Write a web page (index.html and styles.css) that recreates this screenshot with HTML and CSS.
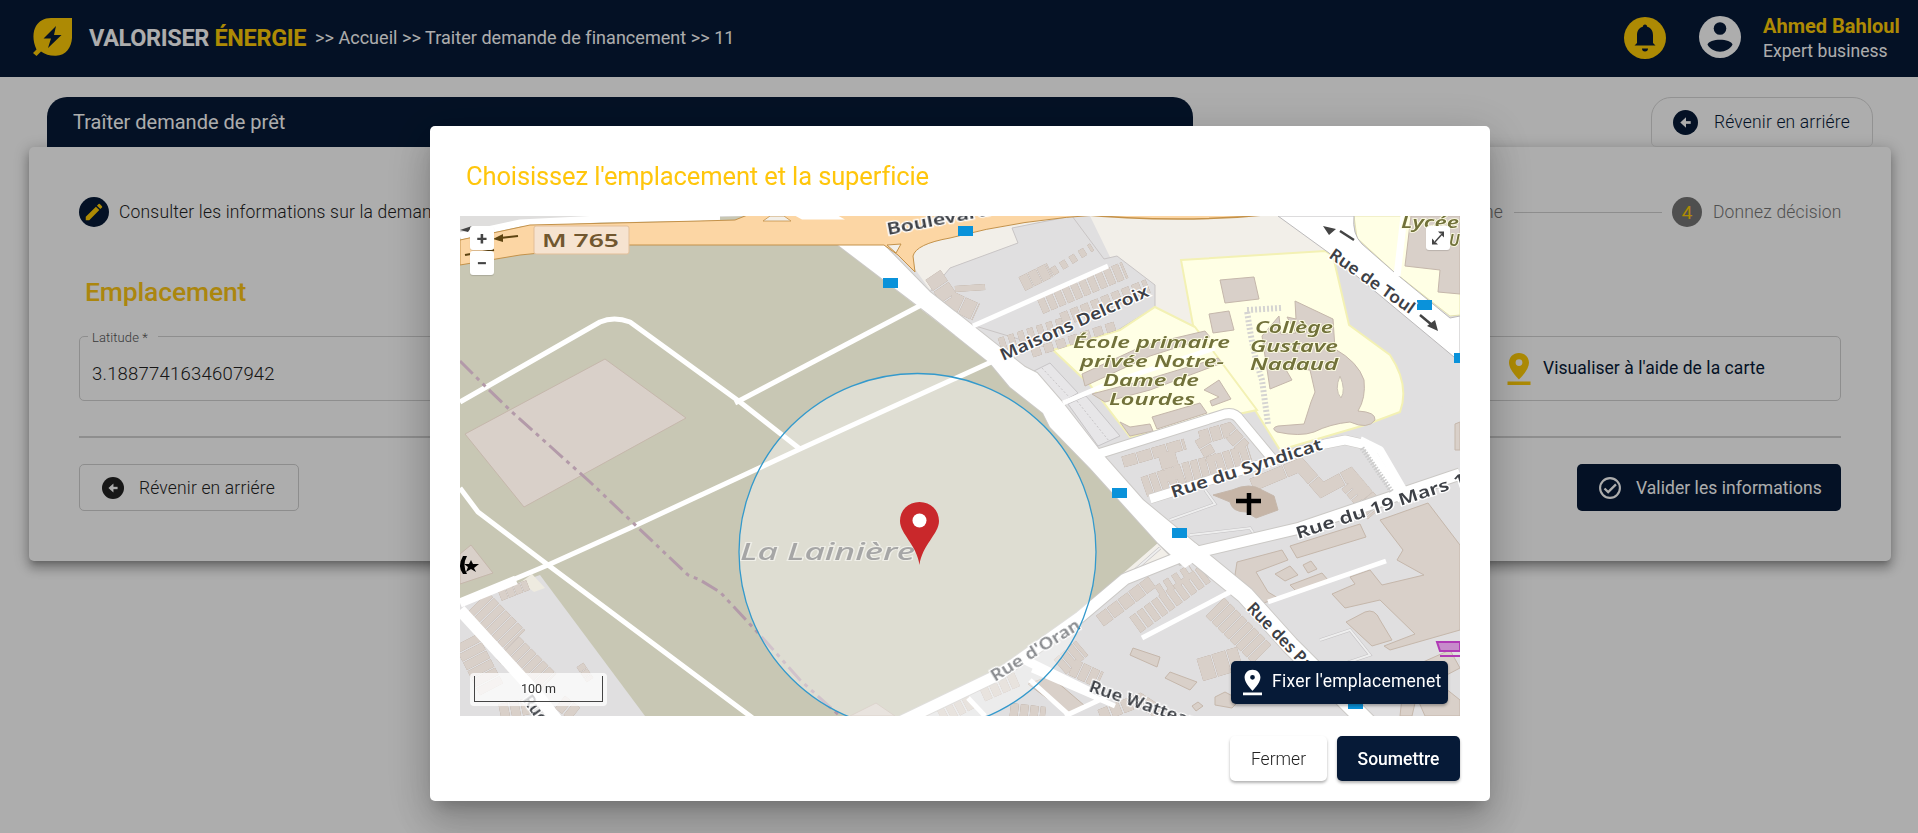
FILE: index.html
```html
<!DOCTYPE html>
<html lang="fr">
<head>
<meta charset="utf-8">
<title>Valoriser Énergie</title>
<link rel="stylesheet" href="styles.css">
</head>
<body>
<header class="topbar">
  <svg class="logo" viewBox="0 0 39 38"><path d="M0 35L3.500 31.500C-1 22 0 13 3 8C6 3 11 0 18 0H39V20C38.500 29 33 37.500 23 37.800C17 38 12 36.500 8 33.500L3.500 38Z" fill="#ffcc06"/><path d="M23 8L10.500 20.500H18L15 30L28.500 17H21Z" fill="#061a37"/></svg>
  <div class="brand">VALORISER <span>ÉNERGIE</span></div>
  <nav class="crumbs">&gt;&gt; Accueil &gt;&gt; Traiter demande de financement &gt;&gt; 11</nav>
  <div class="account">
    <svg class="round" viewBox="0 0 42 42"><circle cx="21" cy="21" r="21" fill="#ffcc06"/><path d="M21 7.500c1.400 0 2.200 1 2.200 2.300C27.500 11 29 14.500 29 18.500V26l2.500 2.500H10.500L13 26v-7.500c0-4 1.500-7.500 5.800-8.700 0-1.300.8-2.300 2.200-2.300ZM18 31.500h6a3 3 0 0 1-6 0Z" fill="#061a37"/></svg>
    <svg class="round user" viewBox="0 0 42 42"><circle cx="21" cy="21" r="21" fill="#fff"/><circle cx="21" cy="12.500" r="6.300" fill="#061a37"/><path d="M8.500 28.500C10 22 32 22 33.500 28.500C29 38 13 38 8.500 28.500Z" fill="#061a37"/></svg>
    <div><div class="name">Ahmed Bahloul</div><div class="role">Expert business</div></div>
  </div>
</header>
<main class="page">
  <div class="tabs">
    <h1 class="tab">Traîter demande de prêt</h1>
    <button class="tab-back"><svg class="ic25" viewBox="0 0 24 24"><circle cx="12" cy="12" r="12" fill="#061a37"/><path d="M17 12H9" stroke="#fff" stroke-width="2.600"/><path d="M12.500 7V17L7 12Z" fill="#fff"/></svg>Révenir en arriére</button>
  </div>
  <section class="card">
    <div class="steps">
      <span class="dot active"><svg viewBox="0 0 24 24"><path d="M3 17.200V21h3.800L17.800 9.900l-3.700-3.700ZM20.700 7a1 1 0 0 0 0-1.400l-2.300-2.300a1 1 0 0 0-1.400 0l-1.800 1.800 3.700 3.700Z" fill="#ffcc06"/></svg></span>
      <span class="step-text on">Consulter les informations sur la demande</span>
      <i class="rail"></i>
      <span class="step-text">Vérifier le domaine</span>
      <i class="rail last"></i>
      <span class="dot">4</span>
      <span class="step-text end">Donnez décision</span>
    </div>
    <h2 class="section">Emplacement</h2>
    <div class="fields">
      <div class="field"><label>Latitude *</label><span>3.1887741634607942</span></div>
      <button class="see-map"><svg viewBox="0 0 24 32"><path d="M12 0C6 0 2 4.300 2 9.800C2 17 12 26.500 12 26.500S22 17 22 9.800C22 4.300 18 0 12 0Zm0 13a3.400 3.400 0 1 1 0-6.800 3.400 3.400 0 0 1 0 6.800ZM.5 28.500h23V32H.5Z" fill="#ffcc06" fill-rule="evenodd"/></svg><span>Visualiser à l'aide de la carte</span></button>
    </div>
    <div class="actions">
      <button class="back"><svg class="ic22" viewBox="0 0 24 24"><circle cx="12" cy="12" r="12" fill="#222"/><path d="M17 12H9" stroke="#fff" stroke-width="2.600"/><path d="M12.500 7V17L7 12Z" fill="#fff"/></svg>Révenir en arriére</button>
      <button class="validate"><svg class="ic22" viewBox="0 0 24 24" fill="none" stroke="#fff"><circle cx="12" cy="12" r="10.800" stroke-width="2.300"/><path d="M6 12.500l4 4L18.500 8" stroke-width="2.500"/></svg>Valider les informations</button>
    </div>
  </section>
</main>
<div class="backdrop">
  <div class="dialog" role="dialog">
    <h3 class="dialog-title">Choisissez l'emplacement et la superficie</h3>
    <div class="map">
      <svg class="tiles" viewBox="460 216 1000 500">
        <defs>
          <g id="stop"><rect width="15" height="10" fill="#0a92da"/></g>
        </defs>
        <g class="soft">
          <rect x="460" y="216" width="1000" height="500" fill="#c8c7b4"/>
          <path d="M838 245L884 245L930 216H1460V716H915L1000 672L1080 615L1158 543L1090 468L1043 413L990 363Z" fill="#e0dfe0"/>
          <path d="M895 216H1278L1330 253L1190 260L1195 326L1155 307V290L1110 257L1090 216L1070 216L1012 228L1018 243L950 268L930 290L905 255Z" fill="#f2efe9"/>
          <path d="M950 268L1018 243L1012 228L1072 216L1104 259L1117 256L1155 285V307L1118 330L1055 350L972 325L930 292Z" fill="#e0dfe0" stroke="#c9c5c5"/>
          <path d="M1158 543L1185 550L1120 580L1040 645Z" fill="#f2efe9"/>
          <path d="M1332 254L1349 325L1390 355L1404 392V400L1460 410V360Z" fill="#e0dfe0"/>
          <path d="M460 604L540 575L645 716H460Z" fill="#e0dfe0"/>
          <path d="M521 582L532 574L545 588L534 592Z" fill="#eeebe0"/>

          <!-- schools -->
          <path d="M1181 260L1325 251L1333 256L1349 325L1390 355Q1410 385 1400 412L1365 425L1280 450L1255 410L1193 325Z" fill="#ffffe5" stroke="#f3f1b4" stroke-width="2"/>
          <path d="M1155 307L1195 327L1257 410L1215 419L1130 437L1090 385L1053 350L1120 330Z" fill="#ffffe5" stroke="#f3f1b4" stroke-width="2"/>
          <path d="M1354 216H1460V315L1450 316L1394 272L1357 238Z" fill="#ffffe5" stroke="#e5e2b0"/>
          <g class="bld">
            <path d="M1411 216L1405 266L1440 270L1438 292L1460 294V216Z"/>
            <path d="M1220 280L1254 277L1259 299L1225 303Z"/><path d="M1209 314L1229 311L1234 330L1213 333Z"/>
            <path d="M1295 301L1333 319L1335 349Q1358 362 1364 380Q1366 398 1358 411Q1376 412 1375 420Q1368 430 1350 422Q1330 424 1314 432Q1300 437 1277 432Q1270 428 1278 426L1304 424L1311 402L1315 392L1310 370L1285 368L1292 380L1270 389L1262 336L1279 316L1281 334L1296 333L1287 317L1296 319Z"/>
            <path d="M1082 374L1145 345L1205 331L1210 337L1150 356L1085 386Z"/><path d="M1092 394L1145 380L1218 358L1222 363L1150 390L1105 402Z"/>
            <path d="M1204 390L1219 380L1231 399L1212 406L1210 401L1219 397Z"/>
            <path d="M1152 417L1200 403L1207 413L1157 429Z"/><path d="M1120 422L1130 427L1150 424L1153 431L1130 436Z"/>
          </g>
          <path d="M1340 376Q1346 390 1341 398Q1334 390 1340 376Z" fill="#ffffe5" stroke="#c9bfb5"/>
          <path d="M1281 308L1247 310Q1252 350 1262 380L1268 424" fill="none" stroke="#d5d4d2" stroke-width="6" stroke-dasharray="2 2"/>

          <!-- dense housing rows -->
          <g class="rows">
            <path d="M933 275L950 300L976 312" stroke-width="18" stroke-dasharray="13 1.500"/><path d="M955 289L985 287" stroke-width="6"/>
            <path d="M1022 284L1050 270" stroke-width="15" stroke-dasharray="9 1"/><path d="M1052 272L1092 247" stroke-width="8" stroke-dasharray="6 5"/>
            <path d="M1040 306L1125 270" stroke-width="17" stroke-dasharray="7 2"/><path d="M1062 320L1148 286" stroke-width="14" stroke-dasharray="8 3"/>
            <path d="M1000 345L1065 324" stroke-width="14" stroke-dasharray="6 4"/><path d="M1032 353L1118 325" stroke-width="9" stroke-dasharray="9 4"/>
            <path d="M1123 462L1185 444" stroke-width="11" stroke-dasharray="14 1.500"/><path d="M1166 452L1174 480" stroke-width="17" stroke-dasharray="16 1"/>
            <path d="M1144 487L1184 473L1218 464L1250 454" stroke-width="20" stroke-dasharray="7 1.500"/>
            <path d="M1200 438L1228 430L1244 448" stroke-width="14" stroke-dasharray="10 1.500"/><path d="M1200 438L1214 462" stroke-width="12" stroke-dasharray="9 1.500"/>
            <path d="M1252 485L1300 465L1322 490L1350 475L1375 505" stroke-width="13" stroke-dasharray="35 1.500"/><path d="M1350 482L1376 512" stroke-width="22" stroke-dasharray="6 1.500"/>
            <path d="M1100 621L1152 582" stroke-width="13" stroke-dasharray="12 1.500"/><path d="M1135 625L1205 574" stroke-width="19" stroke-dasharray="7 2"/>
            <path d="M1158 592L1192 570" stroke-width="13" stroke-dasharray="6 4"/>
            <path d="M1215 607L1262 654" stroke-width="26" stroke-dasharray="7 1.500"/><path d="M1200 670L1240 658" stroke-width="23" stroke-dasharray="14 1.500"/>
            <path d="M1060 667L1082 648" stroke-width="19" stroke-dasharray="7 1.500"/><path d="M1072 667L1100 680" stroke-width="17" stroke-dasharray="8 1.500"/>
            <path d="M940 716L970 700" stroke-width="18" stroke-dasharray="7 2"/><path d="M982 694L1018 678" stroke-width="16" stroke-dasharray="8 2"/>
            <path d="M1100 716L1140 700L1170 720" stroke-width="13" stroke-dasharray="10 2"/><path d="M1010 712L1045 716" stroke-width="18" stroke-dasharray="8 2"/>
            <path d="M478 602L515 640" stroke-width="28" stroke-dasharray="7 1.500"/><path d="M500 596L528 585" stroke-width="10" stroke-dasharray="7 1"/>
            <path d="M508 648L545 685" stroke-width="32" stroke-dasharray="7 1.500"/><path d="M466 640L492 690" stroke-width="26" stroke-dasharray="8 1.500"/>
            <path d="M500 712L530 706M560 702L575 714" stroke-width="16" stroke-dasharray="9 2"/><path d="M580 665L590 680" stroke-width="8" stroke-dasharray="6 1"/>
          </g>
          <g class="bld">
            <path d="M605 359L686 418L524 507L465 434Z"/>
            <path d="M460 554L471 545L493 573L460 584Z" fill="#cdbdb0"/>
            <path class="church" d="M1213 495L1232 490Q1250 482 1262 490L1274 496L1278 510L1256 518L1246 512Q1232 512 1230 502Z"/>
            <path d="M1237 562L1282 550L1288 560L1256 572L1268 592L1278 598L1258 605L1235 575Z"/>
            <path d="M1275 574L1290 566L1298 575L1285 581ZM1303 565L1311 561L1317 569L1308 573ZM1290 585L1322 573L1328 580L1297 592Z"/>
            <path d="M1290 546L1360 524L1366 537L1297 558Z"/>
            <path d="M1380 520L1428 503L1460 545V630L1390 650L1384 646L1415 634L1380 600L1345 608L1332 594L1355 584L1350 577L1370 570L1382 585L1424 575L1397 560L1403 550Z"/>
            <path d="M1346 622L1365 612Q1375 608 1380 620L1392 640L1372 646Z"/>
            <path d="M1130 655L1133 648L1160 657L1157 667Z"/><path d="M1165 678L1170 672L1197 682L1190 690Z"/><path d="M1192 706L1198 702L1203 706L1196 711Z"/>
            <path d="M1215 697L1225 692L1240 700L1232 708L1215 705Z"/>
            <path d="M1028 684L1050 676L1085 706L1068 714Z"/><path d="M1450 650L1405 670L1400 716H1412L1418 690L1460 668Z"/>
            <path d="M1418 700L1445 688L1460 700V716H1425Z"/><path d="M1455 424L1460 422V450H1455Z"/>
            <path d="M858 712L876 703L895 716H850Z"/>
          </g>
          <path d="M1034 371L1050 363L1078 393L1062 402ZM1068 404L1086 396L1120 436L1098 446Z" fill="#e7e6e8" stroke="#c7c5c7"/>
          <path d="M1042 368L1070 398M1077 401L1109 441" stroke="#c7c5c7" stroke-dasharray="2 2"/>
          <path d="M1170 520L1215 504L1205 490M1190 535L1250 528L1258 540M1160 548L1135 570L1142 577M1320 640L1350 630L1370 655L1340 665" fill="none" stroke="#c3c1c3" stroke-width="3"/>
          <path d="M1170 520L1215 504L1205 490M1190 535L1250 528L1258 540M1160 548L1135 570L1142 577M1320 640L1350 630L1370 655L1340 665" fill="none" stroke="#eee" stroke-width="2"/>

          <!-- streets -->
          <g fill="none" stroke="#cbc9c6" stroke-linejoin="round">
            <path d="M900 722L1000 674L1080 617L1125 579L1185 555L1300 528L1460 474" stroke-width="13"/>
            <path d="M1150 499L1325 444L1345 440L1367 445L1402 500" stroke-width="10"/>
            <path d="M1098 454L1225 414Q1235 412 1240 420L1275 462" stroke-width="11"/>
            <path d="M1190 550L1245 595L1290 645L1370 725" stroke-width="19"/>
            <path d="M838 245H884L930 292L972 325L1025 367L1037 373L1063 403L1105 457L1143 500L1207 553L1180 565L1158 543L1090 468L1050 427L1043 413L1010 387L990 363L930 315Z" stroke-width="2"/>
          </g>
          <path d="M838 245H884L930 292L972 325L1025 367L1037 373L1063 403L1105 457L1143 500L1207 553L1185 568L1158 543L1090 468L1050 427L1043 413L1010 387L990 363L930 315Z" fill="#fff"/>
          <g fill="none" stroke="#fff" stroke-linejoin="round">
            <path d="M460 402L600 322Q614 316 630 322L740 402L800 449" stroke-width="5"/>
            <path d="M735 403L925 303" stroke-width="5"/>
            <path d="M460 602L548 565L630 528L800 449L1000 358" stroke-width="5"/>
            <path d="M460 488L478 512L548 565L750 716L760 724" stroke-width="5"/>
            <path d="M460 603L516 580" stroke-width="9"/>
            <path d="M460 610L535 692L560 724" stroke-width="12"/>
            <path d="M900 722L1000 674L1080 617L1125 579L1185 555L1300 528L1460 474" stroke-width="11"/>
            <path d="M1150 499L1325 444L1345 440L1367 445L1402 500" stroke-width="9"/>
            <path d="M1098 454L1225 414Q1235 412 1240 420L1275 462" stroke-width="9"/>
            <path d="M1360 440L1380 450L1408 498" stroke-width="8"/>
            <path d="M973 326L1108 266M1063 403L1110 383L1215 348" stroke-width="5"/>
            <path d="M1190 550L1245 595L1290 645L1370 725" stroke-width="17"/>
            <path d="M1142 638L1230 592M1268 602L1386 561M1032 670L1115 706M1030 680L1070 716M968 698L985 716M1065 716L1110 695" stroke-width="5"/>
            <path d="M1025 660L1090 692" stroke-width="9"/>
          </g>
          <path d="M1362 448L1392 492" stroke="#ccc" stroke-width="5" stroke-dasharray="1.500 1.500"/>
          <path d="M1278 216H1354Q1352 234 1362 244L1394 272L1450 318L1460 316V362L1329 253Z" fill="#fff" stroke="#bcbabb"/>
          <path d="M1404 216L1397 276" stroke="#fff" stroke-width="7"/>

          <!-- ring road -->
          <path d="M460 216H750L530 224L460 238Z" fill="#dfdedd"/>
          <path d="M460 236L520 223L600 219L720 217" fill="none" stroke="#fff" stroke-width="7"/>
          <path d="M460 240L530 225L700 221L735 220L750 214H1110Q1020 219 950 238Q916 244 913 256L915 272L898 255L884 245H620L520 255L460 265Z" fill="#fcd6a4" stroke="#c4924a"/>
          <path d="M887 245L901 244L896 253Z" fill="#f2efe9" stroke="#c4924a"/>
          <path d="M763 221L770 216H784L791 221Z" fill="#f2efe9" stroke="#c4924a" stroke-width=".8"/>
          <path d="M792 214H835L845 219.500H802Z" fill="#fff"/>
          <path d="M1075 214Q1180 224 1275 214" fill="#fcd6a4" stroke="#c4924a" stroke-width="1.500"/>
          <rect x="534" y="226" width="95" height="28" rx="2" fill="#f6e3d0" stroke="#e3bf99"/>
          <path d="M518 236L500 238" stroke="#5e4411" stroke-width="2"/><path d="M493 239L503 234V242Z" fill="#5e4411"/>
          <path d="M465 255L494 250" stroke="#5e4411" stroke-width="2"/>
          <path d="M460 230L472 226L468 232Z" fill="#444"/>

          <path d="M460 361L487 388L512 412L590 482L688 575L700 580L720 592L760 635L800 680L840 716" fill="none" stroke="#b39aa9" stroke-width="3" stroke-dasharray="18 5 4 5 4 5"/>
          <path d="M463 556Q457 566 463 574L467 574Q462 565 467 556ZM471 560L473 564L479 564L474 568L476 572L471 569L466 572L468 567L464 564L469 564Z"/>
          <path d="M1249 493V515M1236 501H1261" stroke="#000" stroke-width="4.500"/>
          <path d="M1437 642H1460V651H1440ZM1440 656H1460" fill="#c78bcb" stroke="#b03ab5" stroke-width="2"/>
          <path d="M1354 240L1340 231M1420 315L1432 325" stroke="#444" stroke-width="2.500"/><path d="M1323 226L1336 229L1329 235ZM1438 331L1427 326L1435 320Z" fill="#444"/>

          <use href="#stop" x="883" y="278"/><use href="#stop" x="958" y="226"/><use href="#stop" x="1417" y="300"/><use href="#stop" x="1454" y="353"/><use href="#stop" x="1112" y="488"/><use href="#stop" x="1172" y="528"/><use href="#stop" x="1348" y="699"/>

          <g class="street">
            <text x="542" y="247" textLength="77" lengthAdjust="spacingAndGlyphs" class="ref">M 765</text>
            <text transform="translate(888 235) rotate(-11)" textLength="105" lengthAdjust="spacingAndGlyphs">Boulevard</text>
            <text transform="translate(1003 361) rotate(-24)" textLength="161" lengthAdjust="spacingAndGlyphs">Maisons Delcroix</text>
            <text transform="translate(1328 257) rotate(35)" textLength="100" lengthAdjust="spacingAndGlyphs">Rue de Toul</text>
            <text transform="translate(1173 498) rotate(-18)" textLength="158" lengthAdjust="spacingAndGlyphs">Rue du Syndicat</text>
            <text transform="translate(1298 539) rotate(-18)" textLength="190" lengthAdjust="spacingAndGlyphs">Rue du 19 Mars 19</text>
            <text transform="translate(1246 609) rotate(46)" textLength="113" lengthAdjust="spacingAndGlyphs">Rue des Pavés</text>
            <text transform="translate(1088 691) rotate(19)" textLength="115" lengthAdjust="spacingAndGlyphs">Rue Watteau</text>
            <text transform="translate(995 682) rotate(-32)" textLength="102" lengthAdjust="spacingAndGlyphs">Rue d'Oran</text>
            <text transform="translate(522 700) rotate(54)">Rue</text>
          </g>
          <g class="place">
            <text x="1073" y="348" textLength="157" lengthAdjust="spacingAndGlyphs">École primaire</text>
            <text x="1080" y="367" textLength="144" lengthAdjust="spacingAndGlyphs">privée Notre-</text>
            <text x="1103" y="386" textLength="96" lengthAdjust="spacingAndGlyphs">Dame de</text>
            <text x="1109" y="405" textLength="86" lengthAdjust="spacingAndGlyphs">Lourdes</text>
            <text x="1255" y="333" textLength="78" lengthAdjust="spacingAndGlyphs">Collège</text>
            <text x="1250" y="352" textLength="88" lengthAdjust="spacingAndGlyphs">Gustave</text>
            <text x="1250" y="370" textLength="88" lengthAdjust="spacingAndGlyphs">Nadaud</text>
            <text x="1401" y="228" textLength="58" lengthAdjust="spacingAndGlyphs">Lycée</text>
            <text x="1449" y="246">U</text>
          </g>
          <text x="740" y="559.500" textLength="175" lengthAdjust="spacingAndGlyphs" class="area">La Lainière</text>
        </g>
        <circle cx="917.500" cy="552" r="178.500" fill="#fff" fill-opacity=".4" stroke="#3399cc" stroke-width="1.300"/>
        <path d="M919.500 502C908 502 900 510.500 900 521C900 534 917 545 919.500 565C922 545 939 534 939 521C939 510.500 931 502 919.500 502Z" fill="#c9282b"/><circle cx="919.500" cy="520.500" r="7" fill="#fff"/>
      </svg>
      <div class="zoom"><button>+</button><button>−</button></div>
      <button class="expand"><svg viewBox="0 0 24 24"><path d="M8 17L17 7" stroke="#444" stroke-width="1.400"/><path d="M12 5.500H18V11.500L16 9.500V7.500H14ZM6 12.500V18.500H12L10 16.500H8V14.500Z" fill="#444"/></svg></button>
      <div class="scale"><div>100 m</div></div>
      <button class="fix"><svg viewBox="0 0 24 32"><path d="M12 0C6 0 2 4.300 2 9.800C2 17 12 26.500 12 26.500S22 17 22 9.800C22 4.300 18 0 12 0Zm0 12.500a3 3 0 1 1 0-6 3 3 0 0 1 0 6ZM0 28.500h24V32H0Z" fill="#fff" fill-rule="evenodd"/></svg><span>Fixer l'emplacemenet</span></button>
    </div>
    <div class="dialog-actions"><button class="close">Fermer</button><button class="submit">Soumettre</button></div>
  </div>
</div>
</body>
</html>
```
FILE: styles.css
```css
* { box-sizing: border-box; }
body { margin: 0; height: 833px; overflow: hidden; background: #fff; font-family: Roboto, "Noto Sans", sans-serif; font-size: 17.5px; color: #222; }
button { font: inherit; color: inherit; border: 0; padding: 0; background: none; display: flex; align-items: center; white-space: nowrap; }
h1, h2, h3 { margin: 0; }
svg { display: block; flex: none; }

.topbar { height: 77px; background: #061a37; color: #fff; display: flex; align-items: center; padding: 0 18px 0 33px; white-space: nowrap; }
.logo { width: 39px; height: 38px; margin-top: -3px; }
.brand { margin: -2px 0 0 17px; width: 226px; font-size: 23.500px; font-weight: 700; letter-spacing: -.35px; }
.brand span { color: #ffcc06; }
.crumbs { margin-top: -2px; font-size: 18px; letter-spacing: .04px; }
.account { margin-left: auto; display: flex; align-items: center; }
.round { width: 42px; height: 42px; margin-top: -1px; }
.user { margin: -3px 22px 0 33px; }
.name { width: 137px; font-size: 20px; line-height: 25px; font-weight: 700; color: #ffcc06; letter-spacing: 0; }
.role { font-size: 17.500px; line-height: 24px; letter-spacing: .05px; }

.page { padding: 20px 27px 0 29px; }
.tabs { display: flex; justify-content: space-between; padding: 0 18px; height: 50px; }
.tab { width: 1146px; padding-left: 26px; background: #061a37; color: #fff; border-radius: 20px 20px 0 0; font-size: 20px; font-weight: 400; line-height: 50px; letter-spacing: 0; }
.tab-back { width: 222px; height: 50px; padding-left: 21px; gap: 16px; border: 1px solid #d8d8d8; border-radius: 20px 20px 5px 5px; font-weight: 300; letter-spacing: .16px; color: #061a37; }
.ic25 { width: 25px; height: 25px; }
.ic22 { width: 22px; height: 22px; }

.card { height: 414px; padding: 50px 50px 0; border-radius: 5px; background: #fff; box-shadow: 0 5px 5px -3px rgba(0,0,0,.2), 0 8px 10px 1px rgba(0,0,0,.14), 0 3px 14px 2px rgba(0,0,0,.22); }
.steps { height: 30px; display: flex; align-items: center; white-space: nowrap; }
.dot { width: 30px; height: 30px; border-radius: 50%; background: #757575; color: #ffcc06; display: grid; place-items: center; font-size: 19px; }
.dot.active { background: #061a37; }
.dot svg { width: 22px; height: 22px; }
.step-text { color: #777; font-weight: 300; letter-spacing: .15px; }
.step-text.on { color: #222; margin-left: 10px; letter-spacing: .18px; }
.step-text.end { margin-left: 11px; width: 128px; }
.rail { height: 1px; flex: 1; background: #d0d0d0; margin: 0 10px; }
.rail.last { flex: none; width: 148px; margin-left: 11px; }
.section { margin: 49px 0 0 6px; font-size: 26.500px; line-height: 32px; font-weight: 500; color: #fdc615; letter-spacing: -.15px; }
.fields { margin-top: 28px; height: 65px; display: flex; justify-content: space-between; }
.field { width: 900px; border: 1px solid #d2d2d2; border-radius: 5px; padding-left: 8px; display: flex; flex-direction: column; align-items: flex-start; font-weight: 300; }
.field label { margin-top: -7px; padding: 0 8px 0 4px; background: #fff; width: 70px; font-size: 13px; line-height: 16px; color: #555; letter-spacing: .1px; }
.field span { margin: 16px 0 0 4px; line-height: 24px; font-size: 18.500px; letter-spacing: .22px; }
.see-map { width: 460px; border: 1px solid #d2d2d2; border-radius: 5px; padding-left: 125px; gap: 12px; color: #061a37; letter-spacing: .05px; }
.see-map span { margin-top: -2px; }
.see-map svg { width: 24px; height: 32px; }
.actions { margin-top: 35px; border-top: 2px solid #d2d2d2; padding-top: 26px; display: flex; justify-content: space-between; }
.back { width: 220px; height: 47px; padding-left: 22px; gap: 15px; border: 1px solid #d0d0d0; border-radius: 5px; font-weight: 300; letter-spacing: .16px; }
.validate { width: 264px; height: 47px; padding-left: 22px; gap: 15px; background: #061a37; color: #fff; border-radius: 5px; letter-spacing: .05px; }

.backdrop { position: fixed; inset: 0; background: rgba(0,0,0,.32); display: flex; align-items: flex-start; justify-content: center; }
.dialog { width: 1060px; height: 675px; margin: 126px 0 0 2px; padding: 0 30px; background: #fff; border-radius: 5px; box-shadow: 0 11px 15px -7px rgba(0,0,0,.2), 0 24px 38px 3px rgba(0,0,0,.14), 0 9px 46px 8px rgba(0,0,0,.12); }
.dialog-title { height: 90px; padding: 33px 0 0 6px; font-size: 25.500px; line-height: 34px; font-weight: 400; color: #ffc60c; letter-spacing: -.12px; }
.map { position: relative; height: 500px; overflow: hidden; }
.tiles { width: 1000px; height: 500px; }
.soft { filter: blur(.75px); }
.bld path { fill: #d9d0c9; stroke: #c5b7ab; stroke-width: 1; }
.bld .church { fill: #c6b5a7; }
.rows { filter: drop-shadow(0 0 .6px #a8978a); }
.rows path { fill: none; stroke: #d9d0c9; }
.street { font: 600 16.500px "Noto Sans", sans-serif; fill: #3d4046; stroke: #fff; stroke-width: 2.500px; paint-order: stroke; }
.street .ref { font-size: 17.500px; font-weight: 600; fill: #71572f; stroke: none; }
.place { font: italic 600 15.500px "Noto Sans", sans-serif; fill: #71713a; stroke: #ffffe5; stroke-width: 1.500px; paint-order: stroke; }
.area { font: italic 500 23px "Noto Sans", sans-serif; fill: #6c6c6c; stroke: #e4e3d8; stroke-width: 2px; paint-order: stroke; }
.zoom { position: absolute; left: 10px; top: 10px; display: grid; gap: 1px; }
.zoom button, .expand { width: 24px; height: 24px; background: #fff; border-radius: 3px; justify-content: center; font-size: 19px; font-weight: 700; color: #444; box-shadow: 0 1px 1px rgba(0,0,0,.15); }
.expand { position: absolute; right: 10px; top: 10px; }
.expand svg { width: 24px; height: 24px; }
.scale { position: absolute; left: 10px; bottom: 10px; width: 137px; height: 33px; padding: 3px 4px 4px; border-radius: 4px; background: rgba(255,255,255,.75); }
.scale div { height: 26px; border: 1px solid #444; border-top: 0; text-align: center; font-size: 12.500px; line-height: 26px; color: #333; }
.fix { position: absolute; left: 771px; top: 445px; width: 217px; height: 43px; padding-left: 12px; gap: 10px; background: #061a37; color: #fff; border-radius: 5px; box-shadow: 0 2px 3px rgba(0,0,0,.3); letter-spacing: .23px; }
.fix span { margin-top: -4px; }
.fix svg { width: 19px; height: 27px; }
.dialog-actions { margin-top: 20px; display: flex; justify-content: flex-end; gap: 10px; }
.close, .submit { height: 45px; justify-content: center; border-radius: 5px; box-shadow: 0 2px 3px rgba(0,0,0,.3); }
.close { width: 97px; font-weight: 300; }
.submit { width: 123px; background: #061a37; color: #fff; font-weight: 500; }
```
